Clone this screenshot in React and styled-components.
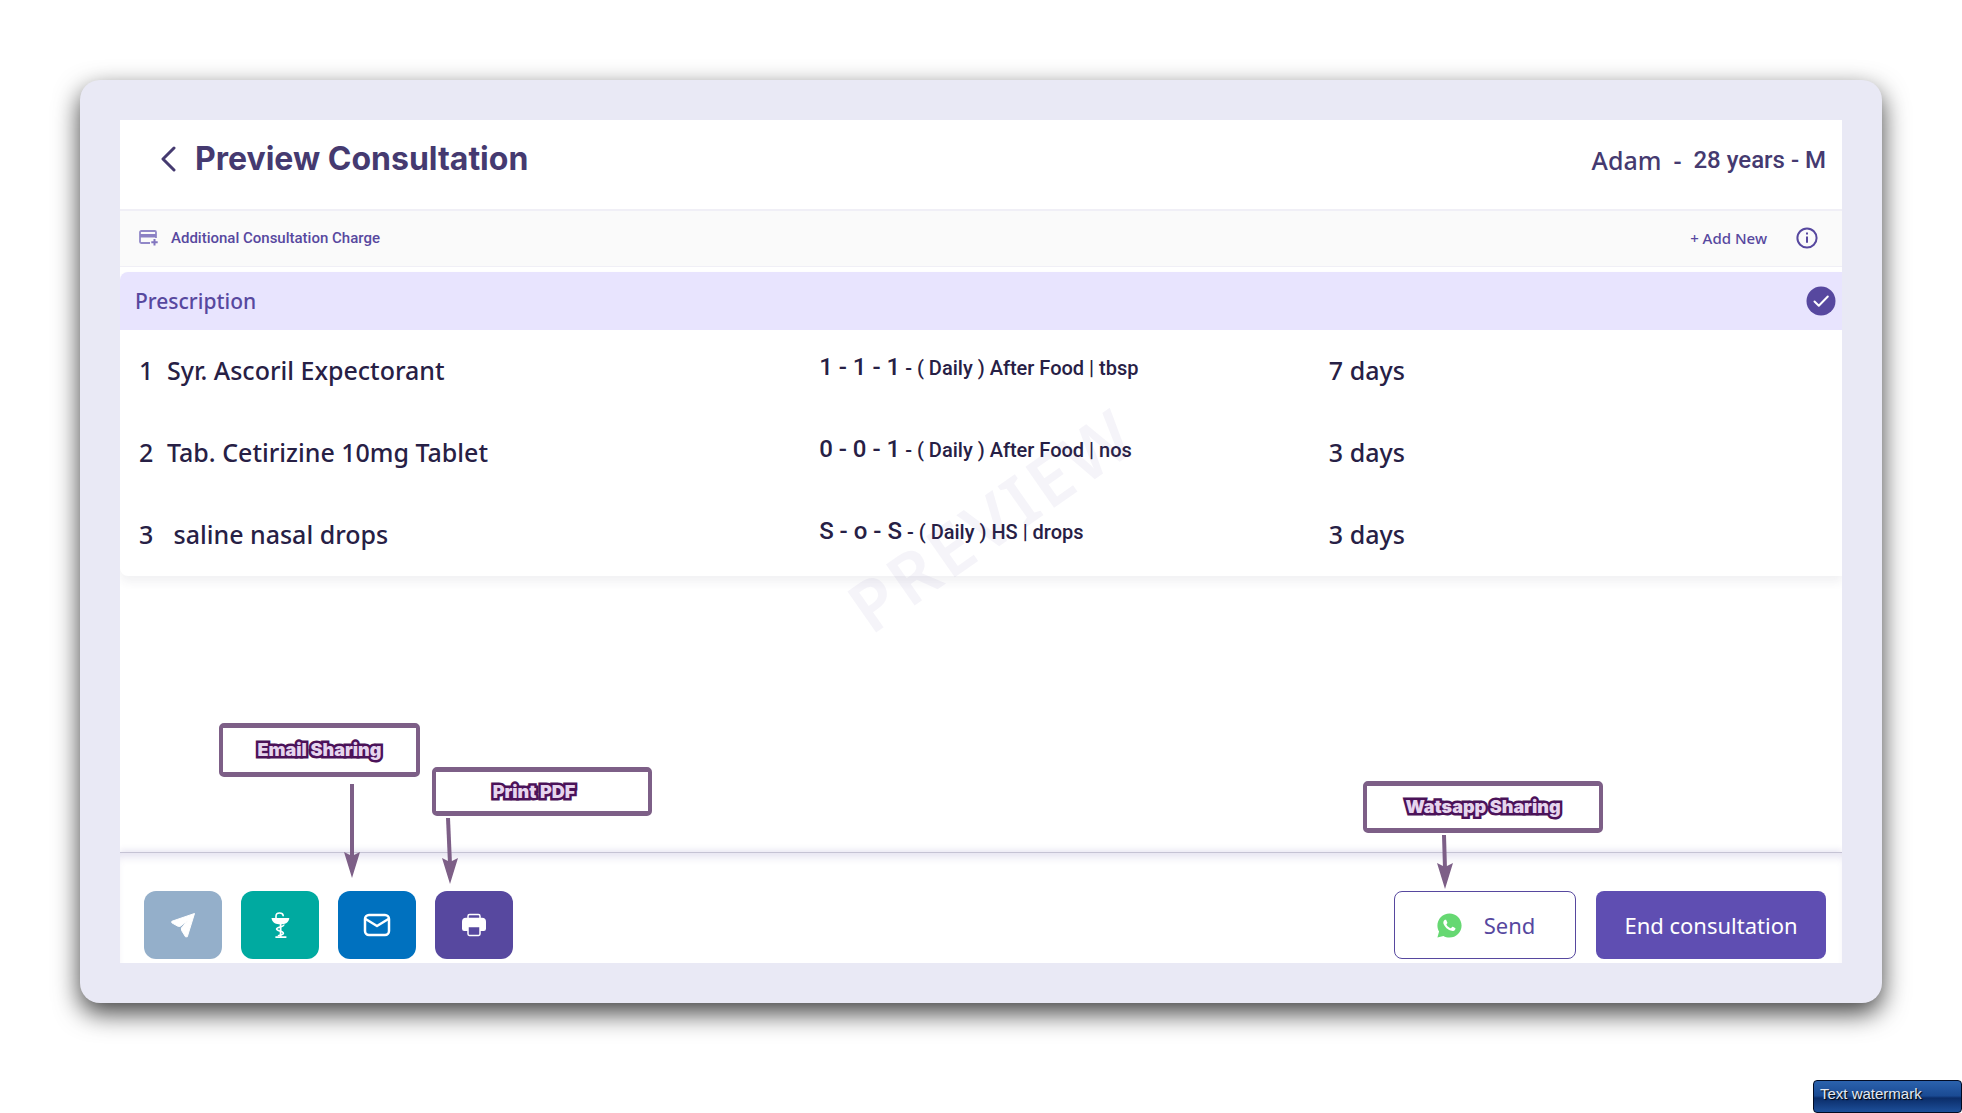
import React from "react";
import styled, { createGlobalStyle } from "styled-components";
import { RiWhatsappFill } from "react-icons/ri";

const prescriptions = [
  { name: "Syr. Ascoril Expectorant", dose: "1 - 1 - 1", note: "- ( Daily ) After Food | tbsp", days: "7 days" },
  { name: "Tab. Cetirizine 10mg Tablet", dose: "0 - 0 - 1", note: "- ( Daily ) After Food | nos", days: "3 days" },
  { name: "\u00a0saline nasal drops", dose: "S - o - S", note: "- ( Daily ) HS | drops", days: "3 days" },
];

function BackIcon() {
  return (
    <svg width="16" height="26" viewBox="0 0 16 26" fill="none">
      <path d="M14 2 3 13l11 11" stroke="currentColor" strokeWidth="3" strokeLinecap="round" strokeLinejoin="round" />
    </svg>
  );
}

function CardPlusIcon() {
  return (
    <svg width="20" height="16" viewBox="0 0 20 16">
      <path d="M11 13H2.200A1.200 1.200 0 0 1 1 11.800V2.200A1.200 1.200 0 0 1 2.200 1h13.600A1.200 1.200 0 0 1 17 2.200V8" fill="none" stroke="#9188c8" strokeWidth="1.800" />
      <path d="M1 4h16v3.500H1z" fill="#8b80c4" />
      <path d="M15.500 9v6.400M12.300 12.200h6.400" stroke="#8276bf" strokeWidth="2" />
    </svg>
  );
}

function InfoIcon() {
  return (
    <svg width="22" height="22" viewBox="0 0 22 22" fill="none" stroke="currentColor">
      <circle cx="11" cy="11" r="9.600" strokeWidth="2" />
      <path d="M11 9.600v6.200M11 5.600v2" strokeWidth="2" />
    </svg>
  );
}

function CheckIcon() {
  return (
    <svg width="30" height="30" viewBox="0 0 30 30" role="img" aria-label="Included">
      <circle cx="15" cy="15" r="14.500" fill="#57489f" />
      <path d="m8.500 15.500 4.300 4.300 9-9.300" fill="none" stroke="#fff" strokeWidth="2" strokeLinecap="round" strokeLinejoin="round" />
    </svg>
  );
}

function PlaneIcon() {
  return (
    <svg width="26" height="26" viewBox="0 0 26 26" fill="currentColor">
      <path d="M24.500 1.500 17.300 24.800 15.500 24.800 11.600 18.500l-.200-2.500 6.400-7.200-7.800 5.600-2.200-.200-6-3.400v-1.500z" stroke="currentColor" strokeWidth="1" strokeLinejoin="round" />
    </svg>
  );
}

function PharmacyIcon() {
  return (
    <svg width="26" height="28" viewBox="0 0 26 28" fill="none" stroke="currentColor">
      <path d="M9 7V5.200C9 3 10.500 2 12.600 2c2 0 3.400 1 3.600 2.600" strokeWidth="1.600" strokeLinecap="round" />
      <path d="M4.500 7h17.800c-.200 3.600-3.200 6.200-7.200 6.200h-3.300c-4 0-7-2.600-7.300-6.200z" fill="currentColor" stroke="none" />
      <path d="M13.600 13v13M8.400 26.200h11" strokeWidth="1.800" />
      <path d="M16.800 13.500c.600 3-7.200 1.800-7.200 4.600 0 2.200 6.800 1.600 6.800 4.200 0 2-3.800 1.300-5.400 2.600" strokeWidth="1.600" />
    </svg>
  );
}

function MailIcon() {
  return (
    <svg width="28" height="24" viewBox="0 0 28 24" fill="none" stroke="currentColor" strokeWidth="2.500">
      <rect x="2" y="2" width="24" height="20" rx="4" />
      <path d="m2.600 6 11.400 7 11.400-7" strokeLinejoin="round" />
    </svg>
  );
}

function PrintIcon() {
  return (
    <svg width="26" height="24" viewBox="0 0 26 24">
      <path d="M7 5V3.200A1.600 1.600 0 0 1 8.600 1.600h8.800A1.600 1.600 0 0 1 19 3.200V5" fill="none" stroke="#fff" strokeWidth="1.500" />
      <path d="M5 4.800h16a4 4 0 0 1 4 4v7a2.200 2.200 0 0 1-2.200 2.200H3.200A2.200 2.200 0 0 1 1 15.800v-7a4 4 0 0 1 4-4z" fill="#fff" />
      <path d="M7 13.600h12v7.400a1.400 1.400 0 0 1-1.400 1.400H8.400A1.400 1.400 0 0 1 7 21z" fill="#57489f" stroke="#fff" strokeWidth="1.500" />
    </svg>
  );
}

function Arrow({ height, lean = 0 }) {
  const tip = 8 + lean;
  return (
    <svg width="20" height={height} viewBox={`0 0 20 ${height}`}>
      <path d={`M8 0 L${tip} ${height - 20}`} stroke="#7d5f87" strokeWidth="4" />
      <path d={`M${tip - 8} ${height - 26} l8 4 l8 -4 l-8 26 z`} fill="#7d5f87" />
    </svg>
  );
}

const actions = [
  { label: "Share", color: "#94afca", icon: <PlaneIcon /> },
  { label: "Pharmacy", color: "#00aaa0", icon: <PharmacyIcon /> },
  { label: "Email", color: "#0071bf", icon: <MailIcon /> },
  { label: "Print", color: "#57489f", icon: <PrintIcon /> },
];

export default function App() {
  return (
    <>
      <GlobalStyle />
      <Page>
        <Frame>
          <Panel>
            <Header>
              <BackButton type="button" aria-label="Back">
                <BackIcon />
              </BackButton>
              <Title>Preview Consultation</Title>
              <Patient>
                <span>Adam</span>
                <span>-</span>
                <PatientMeta>28 years - M</PatientMeta>
              </Patient>
            </Header>
            <ChargeBar>
              <CardPlusIcon />
              <ChargeLabel>Additional Consultation Charge</ChargeLabel>
              <AddButton type="button">+ Add New</AddButton>
              <InfoButton type="button" aria-label="Info">
                <InfoIcon />
              </InfoButton>
            </ChargeBar>
            <Card>
              <CardHead>
                <h2>Prescription</h2>
                <CheckIcon />
              </CardHead>
              <Table>
                <tbody>
                  {prescriptions.map((item, index) => (
                    <tr key={item.name}>
                      <NameCell>
                        <Index>{index + 1}</Index>
                        {item.name}
                      </NameCell>
                      <DoseCell>
                        <Dose>{item.dose}</Dose> {item.note}
                      </DoseCell>
                      <td>{item.days}</td>
                    </tr>
                  ))}
                </tbody>
              </Table>
            </Card>
            <Watermark>PREVIEW</Watermark>
            <Footer>
              <Actions>
                {actions.map((action) => (
                  <IconButton key={action.label} type="button" aria-label={action.label} $color={action.color}>
                    {action.icon}
                  </IconButton>
                ))}
              </Actions>
              <SendButton type="button">
                <RiWhatsappFill size={29} color="#66d872" />
                Send
              </SendButton>
              <EndButton type="button">End consultation</EndButton>
            </Footer>
            <Callout $left="99px" $bottom="186px" $width="201px" $height="54px">Email Sharing</Callout>
            <ArrowSlot $left="224px" $bottom="85px"><Arrow height={94} /></ArrowSlot>
            <Callout $left="312px" $bottom="147px" $width="220px" $height="49px" $shift="16px">Print PDF</Callout>
            <ArrowSlot $left="320px" $bottom="79px"><Arrow height={66} lean={2} /></ArrowSlot>
            <Callout $right="239px" $bottom="130px" $width="240px" $height="52px">Watsapp Sharing</Callout>
            <ArrowSlot $right="386px" $bottom="74px"><Arrow height={54} lean={1} /></ArrowSlot>
          </Panel>
        </Frame>
        <Tag>Text watermark</Tag>
      </Page>
    </>
  );
}

const GlobalStyle = createGlobalStyle`
  * {
    box-sizing: border-box;
  }
  body {
    margin: 0;
    background: #fff;
    font-family: "Noto Sans", sans-serif;
    color: #272045;
  }
  button {
    padding: 0;
    border: 0;
    background: none;
    color: inherit;
    font-family: inherit;
    cursor: pointer;
  }
  svg {
    display: block;
    flex: none;
  }
`;

const Page = styled.div`
  position: relative;
  display: flex;
  flex-direction: column;
  min-height: 100vh;
  padding: 80px 80px 110px;
`;

const Frame = styled.div`
  display: flex;
  flex: 1;
  padding: 40px;
  border-radius: 20px;
  background: #e9e9f5;
  box-shadow: 0 10px 26px rgba(0, 0, 0, 0.75);
`;

const Panel = styled.main`
  position: relative;
  display: flex;
  flex: 1;
  flex-direction: column;
  overflow: hidden;
  background: #fff;
`;

const Header = styled.header`
  display: flex;
  align-items: center;
  height: 89px;
  padding: 0 16px 12px 40px;
  color: #453a70;
`;

const BackButton = styled.button`
  margin-right: 19px;
`;

const Title = styled.h1`
  margin: 0;
  font: 700 32px/40px Inter, sans-serif;
`;

const Patient = styled.div`
  display: flex;
  align-items: center;
  gap: 12px;
  margin-left: auto;
  padding-top: 2px;
  font-size: 25px;
  font-weight: 500;
  line-height: 32px;
`;

const PatientMeta = styled.span`
  font: 500 24px/32px Roboto, sans-serif;
`;

const ChargeBar = styled.div`
  display: flex;
  align-items: center;
  height: 58px;
  padding: 0 24px 2px 19px;
  border-top: 2px solid #f0eff6;
  border-bottom: 1px solid #f0eff6;
  background: #fafafa;
  color: #57489f;
`;

const ChargeLabel = styled.span`
  margin-left: 12px;
  font: 500 15px/20px Roboto, sans-serif;
`;

const AddButton = styled.button`
  margin-left: auto;
  font-size: 15px;
  font-weight: 500;
`;

const InfoButton = styled.button`
  margin-left: 29px;
`;

const Card = styled.section`
  margin-top: 5px;
  border-radius: 8px 0 0 8px;
  box-shadow: 0 6px 10px rgba(60, 60, 80, 0.07);
`;

const CardHead = styled.div`
  display: flex;
  align-items: center;
  justify-content: space-between;
  height: 58px;
  padding: 0 6px 0 15px;
  border-radius: 8px 0 0 0;
  background: #e8e4fe;
  color: #57489f;

  h2 {
    margin: 0;
    font-size: 21px;
    font-weight: 500;
  }
`;

const Table = styled.table`
  width: 100%;
  table-layout: fixed;
  border-collapse: collapse;

  td {
    height: 82px;
    padding: 0 0 2px;
    font-size: 25px;
    font-weight: 500;
    white-space: pre;
  }
`;

const NameCell = styled.td`
  width: 40.6%;

  && {
    padding-left: 19px;
  }
`;

const Index = styled.span`
  display: inline-block;
  width: 28px;
`;

const DoseCell = styled.td`
  width: 29.6%;

  && {
    padding-bottom: 8px;
    font-family: Roboto, sans-serif;
    font-size: 20px;
  }
`;

const Dose = styled.span`
  font-size: 24px;
`;

const Watermark = styled.div`
  position: absolute;
  top: 399px;
  left: 50.6%;
  color: rgba(87, 72, 159, 0.06);
  font-size: 70px;
  font-weight: 600;
  line-height: 1;
  letter-spacing: 4px;
  transform: translate(-50%, -50%) rotate(-35deg);
  pointer-events: none;
`;

const Footer = styled.footer`
  display: flex;
  align-items: center;
  gap: 20px;
  margin-top: auto;
  padding: 38px 16px 4px 24px;
  border-top: 1px solid #c5c3d4;
  box-shadow: 0 -2px 6px rgba(87, 72, 159, 0.14), inset 0 8px 8px -4px rgba(87, 72, 159, 0.16);
`;

const Actions = styled.div`
  display: flex;
  gap: 19px;
  margin-right: auto;
`;

const IconButton = styled.button`
  display: grid;
  place-items: center;
  width: 78px;
  height: 68px;
  border-radius: 12px;
  background: ${(props) => props.$color};
  color: #fff;
`;

const WideButton = styled.button`
  display: flex;
  align-items: center;
  justify-content: center;
  height: 68px;
  border-radius: 8px;
  font-size: 22px;
`;

const SendButton = styled(WideButton)`
  gap: 20px;
  width: 182px;
  border: 1px solid #57489f;
  color: #57489f;
`;

const EndButton = styled(WideButton)`
  width: 230px;
  background: #5f4eb2;
  color: #fff;
`;

const Callout = styled.div`
  position: absolute;
  bottom: ${(props) => props.$bottom};
  left: ${(props) => props.$left};
  right: ${(props) => props.$right};
  display: flex;
  align-items: center;
  justify-content: center;
  width: ${(props) => props.$width};
  height: ${(props) => props.$height};
  padding-right: ${(props) => props.$shift};
  border: solid #7d5f87;
  border-width: 5px 4px;
  border-radius: 5px;
  background: #fff;
  color: #e6d5ee;
  font: 900 18px/24px Inter, sans-serif;
  -webkit-text-stroke: 5px #4b1259;
  paint-order: stroke fill;
`;

const ArrowSlot = styled.div`
  position: absolute;
  bottom: ${(props) => props.$bottom};
  left: ${(props) => props.$left};
  right: ${(props) => props.$right};
`;

const Tag = styled.div`
  position: absolute;
  right: 0;
  bottom: 0;
  width: 149px;
  height: 33px;
  padding-left: 6px;
  border: 1px solid #020b22;
  border-radius: 4px;
  background: linear-gradient(#2b62ad 0%, #1a4a93 48%, #0b2d69 55%, #1d4f9a 100%);
  color: #e4e9f2;
  font: 15px/26px "Liberation Sans", sans-serif;
  text-shadow: 1px 1px 1px #000;
`;
